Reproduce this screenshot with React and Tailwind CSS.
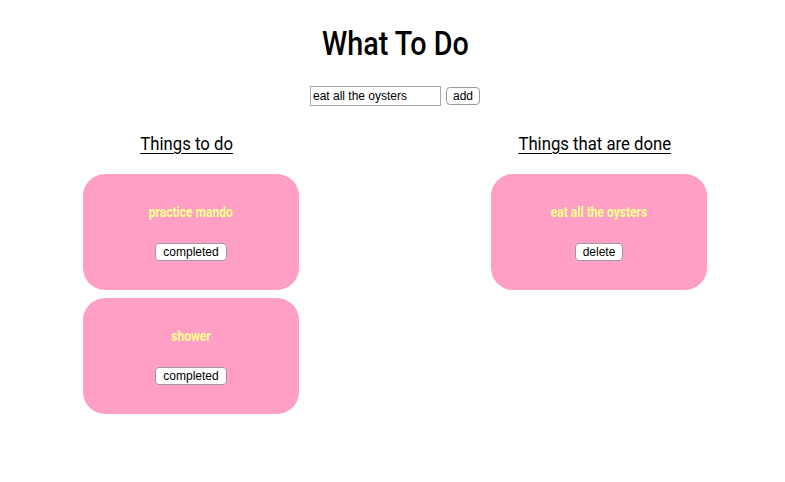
import { useState } from 'react'

function Card({ title, action }) {
  return (
    <div className="w-[216px] h-[116px] rounded-[22px] bg-[#ff9fc6] flex flex-col items-center pt-[30px]">
      <h3 className="inline-block scale-x-[0.86] text-[14px] leading-[16px] font-bold text-[#ffff8c]">{title}</h3>
      <button className="mt-[23px] h-[18px] px-[7px] bg-white border border-[#9a9a9a] rounded-[4px] text-[12px] leading-[16px] text-black font-['Liberation_Sans',sans-serif]">
        {action}
      </button>
    </div>
  )
}

export default function App() {
  const [text, setText] = useState('eat all the oysters')
  const todo = ['practice mando', 'shower']
  const done = ['eat all the oysters']

  return (
    <div className="w-[785px] h-[482px] bg-white font-['Roboto',sans-serif] text-black">
      <div className="pt-[24px] flex justify-center pl-[6px]">
        <h1 className="inline-block scale-x-[0.87] text-[33px] leading-[40px] font-medium">What To Do</h1>
      </div>
      <div className="mt-[22px] flex justify-center items-center gap-[5px] pl-[5px]">
        <input
          value={text}
          onChange={e => setText(e.target.value)}
          className="w-[131px] h-[20px] border border-[#a9a9a9] px-[2px] text-[12px] font-['Liberation_Sans',sans-serif] outline-none"
        />
        <button className="h-[18px] px-[6px] bg-white border border-[#9a9a9a] rounded-[4px] text-[12px] leading-[16px] font-['Liberation_Sans',sans-serif]">add</button>
      </div>
      <div className="mt-[26px] pl-[83px] flex gap-[192px]">
        <div className="w-[216px] flex flex-col">
          <div className="flex justify-center pr-[8px]">
            <h2 className="inline-block scale-x-[0.88] text-[19px] leading-[24px] underline underline-offset-[3px]">Things to do</h2>
          </div>
          <div className="mt-[18px] flex flex-col gap-[8px]">
            {todo.map(t => <Card key={t} title={t} action="completed" />)}
          </div>
        </div>
        <div className="w-[216px] flex flex-col">
          <div className="flex justify-center pr-[8px]">
            <h2 className="inline-block scale-x-[0.88] text-[19px] leading-[24px] underline underline-offset-[3px]">Things that are done</h2>
          </div>
          <div className="mt-[18px] flex flex-col gap-[8px]">
            {done.map(t => <Card key={t} title={t} action="delete" />)}
          </div>
        </div>
      </div>
    </div>
  )
}
